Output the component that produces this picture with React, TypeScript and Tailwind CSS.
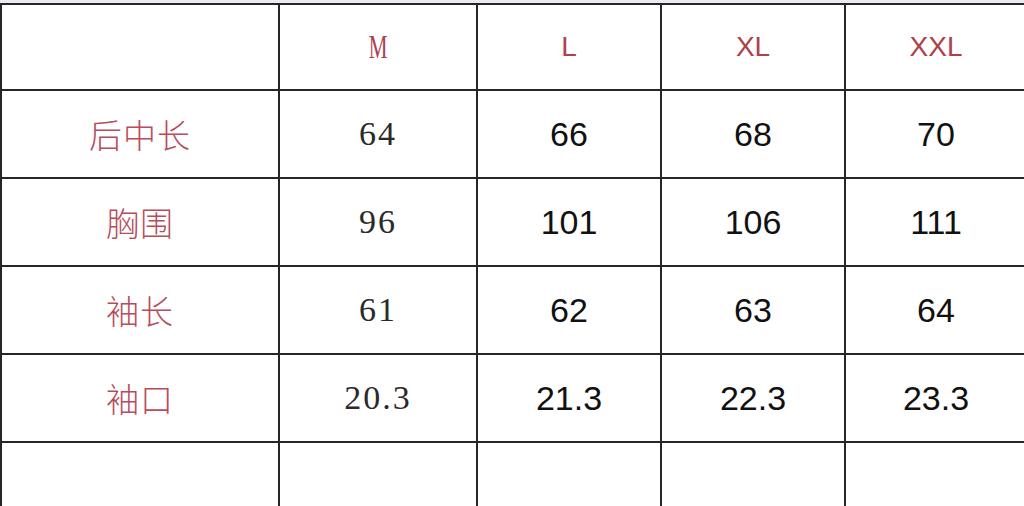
import React from 'react';

type Row = {
  label: string;
  values: string[];
};

const sizes = ['M', 'L', 'XL', 'XXL'];

const rows: Row[] = [
  { label: '后中长', values: ['64', '66', '68', '70'] },
  { label: '胸围', values: ['96', '101', '106', '111'] },
  { label: '袖长', values: ['61', '62', '63', '64'] },
  { label: '袖口', values: ['20.3', '21.3', '22.3', '23.3'] },
  { label: '', values: ['', '', '', ''] },
];

const cellBase = 'flex items-center justify-center border-r-2 border-b-2 border-[#262626] bg-white';
const serif = "font-['Liberation_Serif','Noto_Sans_CJK_SC',serif]";
const sans = "font-['Liberation_Sans',Arial,sans-serif]";

export default function App() {
  return (
    <div className="h-[506px] w-[1024px] overflow-hidden bg-[#e9edf1] pt-[3px]">
      <div className="grid w-[1030px] grid-cols-[280px_198px_184px_184px_182px] border-t-2 border-[#262626] bg-white">
        {/* header row */}
        <div className={`${cellBase} h-[86px] border-l-2`} />
        {sizes.map((size, i) => (
          <div key={size} className={`${cellBase} h-[86px]`}>
            {i === 0 ? (
              <span className={`${serif} scale-x-[0.62] text-[34px] leading-none text-[#b0404e]`}>{size}</span>
            ) : (
              <span className={`${sans} text-[28px] leading-none text-[#b0404e]`}>{size}</span>
            )}
          </div>
        ))}

        {rows.map((row, r) => (
          <React.Fragment key={r}>
            <div className={`${cellBase} h-[88px] border-l-2`}>
              <span className="font-['Noto_Sans_CJK_SC',sans-serif] text-[33px] font-light leading-none tracking-[1px] text-[#b84c5c]">
                {row.label}
              </span>
            </div>
            {row.values.map((v, i) => (
              <div key={i} className={`${cellBase} h-[88px]`}>
                {i === 0 ? (
                  <span className={`${serif} text-[34px] leading-none tracking-[2px] text-[#2a2a2a]`}>{v}</span>
                ) : (
                  <span className={`${sans} text-[34px] leading-none text-[#111]`}>{v}</span>
                )}
              </div>
            ))}
          </React.Fragment>
        ))}
      </div>
    </div>
  );
}
